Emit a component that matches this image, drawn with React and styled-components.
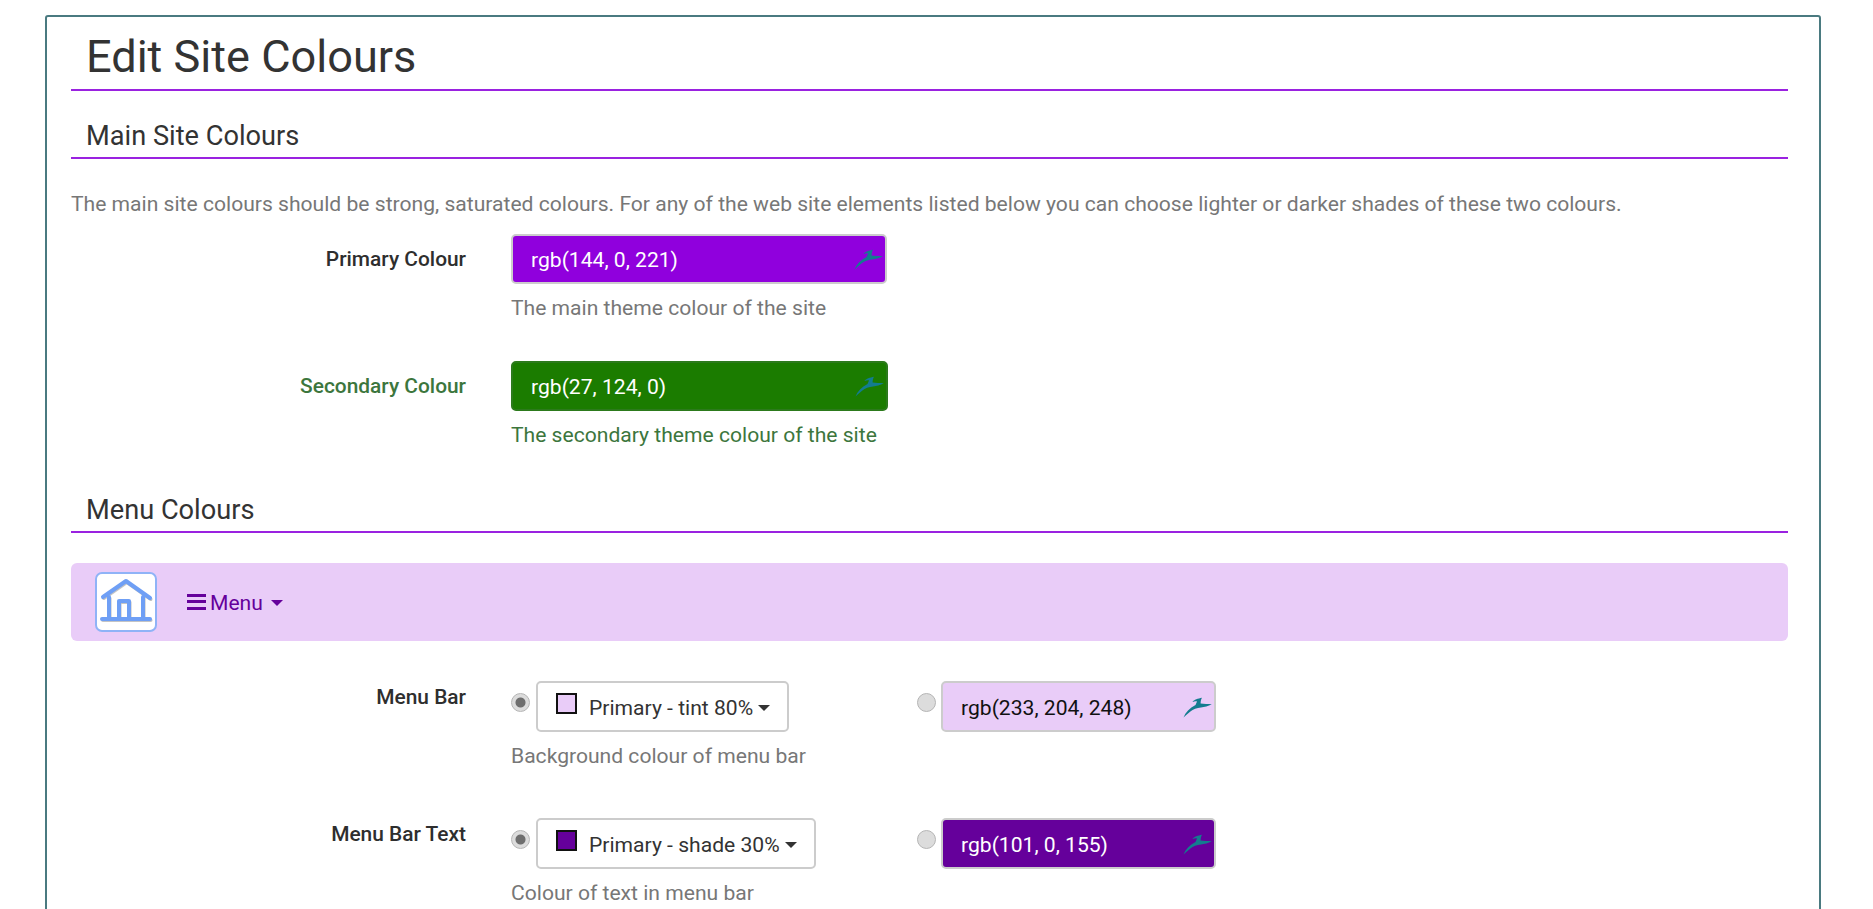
import React from "react";
import styled, { createGlobalStyle } from "styled-components";

const Global = createGlobalStyle`
  html, body { margin: 0; padding: 0; height: 909px; overflow: hidden; background: #fff; }
  body { font-family: Roboto, "Liberation Sans", sans-serif; font-size: 21.1px; color: #333; }
`;

const Panel = styled.main`
  margin: 15px 52px 0 45px;
  height: 1200px;
  box-sizing: border-box;
  border: 2px solid #4a7a80;
  border-radius: 3px;
  padding: 0 31px 0 24px;
`;

const PageTitle = styled.h1`
  margin: 0;
  height: 74px;
  box-sizing: border-box;
  padding: 13px 0 0 15px;
  border-bottom: 2px solid #9a22e0;
  font-size: 45.1px;
  font-weight: 400;
  line-height: 54px;
  color: #333;
`;

const SectionTitle = styled.h2`
  margin: ${(p) => p.$top}px 0 0;
  height: 45px;
  box-sizing: border-box;
  padding: 5px 0 0 15px;
  border-bottom: 2px solid #9a22e0;
  font-size: 27.2px;
  font-weight: 400;
  line-height: 34px;
  color: #333;
`;

const Intro = styled.p`
  margin: 31px 0 0;
  font-size: 21.1px;
  line-height: 28px;
  color: #777;
`;

const FormRow = styled.div`
  display: grid;
  grid-template-columns: 395px 1fr;
  column-gap: 45px;
  margin-top: ${(p) => p.$top}px;
`;

const Label = styled.label`
  text-align: right;
  font-size: 20.9px;
  font-weight: 500;
  line-height: 28px;
  padding-top: ${(p) => p.$pad}px;
  color: ${(p) => (p.$success ? "#3c763d" : "#2e2e2e")};
`;

const Help = styled.div`
  margin-top: 10px;
  font-size: 21.1px;
  line-height: 28px;
  color: ${(p) => (p.$success ? "#3c763d" : "#777")};
`;

const Controls = styled.div`
  display: flex;
  align-items: flex-start;
`;

const Field = styled.div`
  box-sizing: border-box;
  width: ${(p) => p.$width}px;
  height: ${(p) => p.$height}px;
  display: flex;
  align-items: center;
  justify-content: space-between;
  padding: 1px 2px 0 18px;
  border: 2px solid ${(p) => p.$border || "#ccc"};
  border-radius: 5px;
  background: ${(p) => p.$bg};
  color: ${(p) => p.$fg};
  font-size: 21.1px;
`;

const NavBar = styled.nav`
  display: flex;
  align-items: center;
  margin-top: 30px;
  height: 78px;
  padding-left: 24px;
  border-radius: 6px;
  background: #e9ccf8;
  color: #65009b;
  font-size: 21.1px;
`;

const Logo = styled.div`
  box-sizing: border-box;
  width: 62px;
  height: 60px;
  display: flex;
  align-items: center;
  justify-content: center;
  border: 2px solid #8fb3f7;
  border-radius: 7px;
  background: #fff;
`;

const MenuToggle = styled.div`
  display: flex;
  align-items: center;
  margin-left: 30px;
`;

const Bars = styled.span`
  display: block;
  width: 19px;
  height: 16px;
  margin-right: 4px;
  background: linear-gradient(#65009b 0 3px, transparent 3px 6.5px, #65009b 6.5px 9.5px, transparent 9.5px 13px, #65009b 13px 16px);
`;

const Caret = styled.span`
  display: inline-block;
  width: 0;
  height: 0;
  margin-left: ${(p) => p.$gap}px;
  margin-top: 2px;
  border-left: 6px solid transparent;
  border-right: 6px solid transparent;
  border-top: 6px solid currentColor;
`;

const Radio = styled.span`
  box-sizing: border-box;
  flex: none;
  width: 19px;
  height: 19px;
  margin: 12px ${(p) => p.$gap}px 0 0;
  border: 1px solid #b5b5b5;
  border-radius: 50%;
  background: ${(p) =>
    p.$on
      ? "radial-gradient(circle, #6e6e6e 0 4.5px, #dcdcdc 5.5px)"
      : "#dcdcdc"};
`;

const SelectBox = styled.div`
  box-sizing: border-box;
  width: ${(p) => p.$width}px;
  height: 51px;
  display: flex;
  align-items: center;
  padding: 1px 0 0 18px;
  border: 2px solid #ccc;
  border-radius: 5px;
  background: #fff;
  color: #333;
  font-size: 21.1px;
`;

const Swatch = styled.span`
  box-sizing: border-box;
  width: 21px;
  height: 21px;
  margin: -7px 12px 0 0;
  border: 2px solid #111;
  background: ${(p) => p.$color};
`;

const Spacer = styled.span`
  flex: none;
  width: ${(p) => p.$width}px;
`;

const Gazelle = () => (
  <svg width="29" height="21" viewBox="0 0 29 21" aria-hidden="true">
    <path
      d="M0.5 20.5 C2.5 15.5 6.5 11 12.5 8 L14 4.4 C12.5 4.2 11 4.4 9.5 5 C11 2.6 15 1.6 19 0.8 C18 2.6 17.6 4.4 17.6 6.4 C21 6.8 25 6.9 28.8 7.2 C25 9 21.5 10 18 10.6 C14 11 10 12.4 7.4 14.4 C5 16.2 2.6 18.6 0.5 20.5 Z"
      fill="#137c8f"
    />
  </svg>
);

const HouseLogo = () => (
  <svg width="58" height="56" viewBox="0 0 58 56" fill="none" aria-hidden="true">
    <path d="M6 23 L29 7 L53 24 M12 23 V45 M46 23 V45 M22 45 V27 H32 V45 M5 45 H53" stroke="#c4c4c4" strokeWidth="3.5" strokeLinecap="round" strokeLinejoin="round" transform="translate(0.8 1.2)" />
    <path d="M6 23 L29 7 L53 24 M12 23 V45 M46 23 V45 M22 45 V27 H32 V45 M5 45 H53" stroke="#6f9ff5" strokeWidth="4" strokeLinecap="round" strokeLinejoin="round" />
  </svg>
);

const ColourField = ({ width, bg, fg, border, height, value }) => (
  <Field $width={width} $bg={bg} $fg={fg} $border={border} $height={height}>
    {value}
    <Gazelle />
  </Field>
);

const ChoiceRow = ({ top, label, name, swatch, selectWidth, spacer, fieldBg, fieldFg, value, help }) => (
  <FormRow $top={top}>
    <Label $pad={2}>{label}</Label>
    <div>
      <Controls>
        <Radio $on $gap={6} />
        <SelectBox $width={selectWidth}>
          <Swatch $color={swatch} />
          {name}
          <Caret $gap={5} />
        </SelectBox>
        <Spacer $width={spacer} />
        <Radio $gap={5} />
        <ColourField width={275} height={51} bg={fieldBg} fg={fieldFg} value={value} />
      </Controls>
      <Help>{help}</Help>
    </div>
  </FormRow>
);

export default function App() {
  return (
    <>
      <Global />
      <Panel>
        <PageTitle>Edit Site Colours</PageTitle>
        <SectionTitle $top={23}>Main Site Colours</SectionTitle>
        <Intro>
          The main site colours should be strong, saturated colours. For any of the web site elements listed below you can choose lighter or darker shades of these two colours.
        </Intro>
        <FormRow $top={16}>
          <Label $pad={11}>Primary Colour</Label>
          <div>
            <ColourField width={376} height={50} bg="#9000dd" fg="#fff" value="rgb(144, 0, 221)" />
            <Help>The main theme colour of the site</Help>
          </div>
        </FormRow>
        <FormRow $top={39}>
          <Label $pad={11} $success>Secondary Colour</Label>
          <div>
            <ColourField width={377} height={50} bg="#1b7c00" fg="#fff" border="#2c7a1c" value="rgb(27, 124, 0)" />
            <Help $success>The secondary theme colour of the site</Help>
          </div>
        </FormRow>
        <SectionTitle $top={39}>Menu Colours</SectionTitle>
        <NavBar>
          <Logo><HouseLogo /></Logo>
          <MenuToggle>
            <Bars />
            Menu
            <Caret $gap={8} />
          </MenuToggle>
        </NavBar>
        <ChoiceRow
          top={40}
          label="Menu Bar"
          name="Primary - tint 80%"
          swatch="#e9ccf8"
          selectWidth={253}
          spacer={128}
          fieldBg="#e9ccf8"
          fieldFg="#111"
          value="rgb(233, 204, 248)"
          help="Background colour of menu bar"
        />
        <ChoiceRow
          top={48}
          label="Menu Bar Text"
          name="Primary - shade 30%"
          swatch="#65009b"
          selectWidth={280}
          spacer={101}
          fieldBg="#65009b"
          fieldFg="#fff"
          value="rgb(101, 0, 155)"
          help="Colour of text in menu bar"
        />
      </Panel>
    </>
  );
}
